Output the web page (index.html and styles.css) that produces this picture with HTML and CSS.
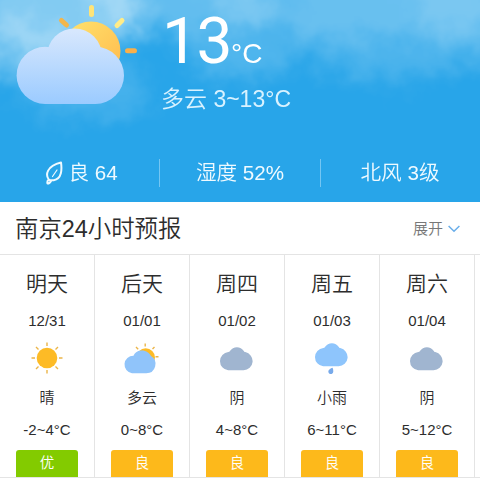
FILE: index.html
```html
<!DOCTYPE html>
<html lang="zh-CN">
<head>
<meta charset="utf-8">
<title>南京天气</title>
<link rel="stylesheet" href="styles.css">
</head>
<body>
<svg class="defs" width="0" height="0" aria-hidden="true">
  <defs>
    <linearGradient id="sunFill" x1="0" y1="0" x2="1" y2="1"><stop offset="0" stop-color="#ffe46e"/><stop offset="1" stop-color="#ffb84b"/></linearGradient>
    <linearGradient id="cloudFill" gradientUnits="userSpaceOnUse" x1="0" y1="28" x2="0" y2="104"><stop offset="0" stop-color="#d9e8fd"/><stop offset="1" stop-color="#9bcbff"/></linearGradient>
    <symbol id="overcast" viewBox="0 0 36 32"><path d="M10.200 28.300h15.400a9.200 9.200 0 0 0 1.700-18.200c-.8-.2-1.100-.5-1.500-1.100a8.300 8.300 0 0 0-13.800 0c-.4.600-.9.900-1.700 1A9.200 9.200 0 0 0 10.200 28.300z"/></symbol>
  </defs>
</svg>
<main class="page">
  <section class="hero">
    <svg class="sky" viewBox="0 0 480 202" aria-hidden="true">
      <defs>
        <filter id="vapor" filterUnits="userSpaceOnUse" x="-60" y="-60" width="600" height="262" color-interpolation-filters="sRGB">
          <feGaussianBlur in="SourceGraphic" stdDeviation="11" result="b"/>
          <feTurbulence type="fractalNoise" baseFrequency=".04" numOctaves="4" seed="8" result="n"/>
          <feDisplacementMap in="b" in2="n" scale="36" xChannelSelector="R" yChannelSelector="G"/>
          <feGaussianBlur stdDeviation="1.300"/>
        </filter>
      </defs>
      <g fill="#fff" filter="url(#vapor)">
        <ellipse cx="60" cy="5" rx="80" ry="50" opacity=".42"/>
        <ellipse cx="10" cy="50" rx="55" ry="28" opacity=".3"/>
        <ellipse cx="85" cy="90" rx="65" ry="30" opacity=".14"/>
        <ellipse cx="185" cy="0" rx="95" ry="35" opacity=".27"/>
        <ellipse cx="240" cy="55" rx="55" ry="24" opacity=".19"/>
        <ellipse cx="360" cy="0" rx="150" ry="40" opacity=".17"/>
        <ellipse cx="400" cy="20" rx="120" ry="60" opacity=".16"/>
        <ellipse cx="465" cy="0" rx="50" ry="50" opacity=".12"/>
      </g>
    </svg>
    <div class="current">
      <svg class="current-icon" viewBox="0 0 130 105" aria-hidden="true">
        <circle cx="81" cy="51" r="29.500" fill="url(#sunFill)"/>
        <g stroke-width="5" stroke-linecap="round" fill="none">
          <path d="M81.500 7.500v7" stroke="#ffe477"/><path d="M51.500 20.500l5 4.500" stroke="#f2b64c"/><path d="M112 20.500l-5 5" stroke="#ffec88"/><path d="M117.500 50.700h7" stroke="#f9b04a"/>
        </g>
        <g fill="url(#cloudFill)"><circle cx="35.200" cy="75.400" r="28.600"/><circle cx="85.400" cy="75.400" r="28.600"/><circle cx="64.500" cy="56" r="27.500"/><path d="M35.200 60h50.200v44H35.200z"/></g>
      </svg>
      <div class="reading">
        <div class="temp"><span class="degrees">13</span><span class="unit">°C</span></div>
        <div class="range">多云 3~13°C</div>
      </div>
    </div>
    <div class="stats">
      <div class="stat"><svg class="leaf" viewBox="0 0 18 24" aria-hidden="true"><path d="M3.800 18.500C.3 14 1.500 5 16 1.500C17 8.500 16.800 18.200 8.800 19.200C6.800 19.500 5.200 19.500 3.800 18.500Q1.800 20 2.500 22.500Q4.800 22.500 6 20"/><path class="vein" d="M7.500 15.500L12 9"/></svg>良 64</div>
      <div class="stat">湿度 52%</div>
      <div class="stat">北风 3级</div>
    </div>
  </section>
  <header class="bar">
    <h1 class="title">南京24小时预报</h1>
    <div class="expand">展开<svg class="chevron" viewBox="0 0 12 8" aria-hidden="true"><path d="M.6 1l5.400 5.200L11.400 1"/></svg></div>
  </header>
  <section class="days">
    <article class="day">
      <div class="name">明天</div><div class="date">12/31</div>
      <svg class="icon" viewBox="0 0 36 32"><circle cx="18" cy="16" r="10.300" fill="#fdbb26"/><path class="rays" d="M18 .5v3.500M18 28v3.500M2.500 16H6M30 16h3.500M7 5l2.500 2.500M26.500 24.500L29 27M29 5l-2.500 2.500M9.500 24.500L7 27"/></svg>
      <div class="sky-text">晴</div><div class="temps">-2~4°C</div><div class="badge good">优</div>
    </article>
    <article class="day">
      <div class="name">后天</div><div class="date">01/01</div>
      <svg class="icon shifted" viewBox="0 0 36 32"><circle cx="22.700" cy="15.500" r="9.300" fill="#fdbb26"/><path class="rays" d="M22.200 1.500v3M13 5l2.200 2.200M31.500 5l-2 2M32.500 14.800h3"/><path fill="#90c4fa" d="M9 31.200h14.300a9.200 9.200 0 0 0 4.700-17.100C26.500 11 23 8.300 18 8.600c-4 .3-6.300 2.500-7.500 5.100A8.800 8.800 0 0 0 9 31.200z"/></svg>
      <div class="sky-text">多云</div><div class="temps">0~8°C</div><div class="badge">良</div>
    </article>
    <article class="day">
      <div class="name">周四</div><div class="date">01/02</div>
      <svg class="icon gray shifted" viewBox="0 0 36 32"><use href="#overcast" width="36" height="32"/></svg>
      <div class="sky-text">阴</div><div class="temps">4~8°C</div><div class="badge">良</div>
    </article>
    <article class="day">
      <div class="name">周五</div><div class="date">01/03</div>
      <svg class="icon shifted" viewBox="0 0 36 32"><g fill="#8ec5fc" transform="translate(0 -4)"><use href="#overcast" width="36" height="32"/></g><path fill="#78aaea" d="M19.600 25.800c-2 .7-4.300 1.800-4.300 3.800a2.500 2.500 0 0 0 5 0c0-1.400-.1-2.600-.7-3.800z"/></svg>
      <div class="sky-text">小雨</div><div class="temps">6~11°C</div><div class="badge">良</div>
    </article>
    <article class="day">
      <div class="name">周六</div><div class="date">01/04</div>
      <svg class="icon gray shifted" viewBox="0 0 36 32"><use href="#overcast" width="36" height="32"/></svg>
      <div class="sky-text">阴</div><div class="temps">5~12°C</div><div class="badge">良</div>
    </article>
  </section>
</main>
</body>
</html>
```
FILE: styles.css
```css
* { box-sizing: border-box; }
body { margin: 0; background: #fff; color: #2d2d2d; font-family: "Liberation Sans", "Noto Sans CJK SC", sans-serif; font-weight: 350; }
.defs { position: absolute; }
.page { width: 480px; height: 480px; overflow: hidden; }
.hero { position: relative; height: 202px; overflow: hidden; background: #28a5e9; color: #fff; }
.sky { position: absolute; left: 0; top: 0; width: 480px; height: 202px; }
.current { position: relative; display: flex; height: 143px; padding-left: 10px; }
.current-icon { width: 130px; height: 105px; flex: none; }
.reading { padding-left: 22px; }
.temp { height: 83px; padding-top: 4px; font-size: 65px; line-height: 74px; white-space: nowrap; }
.degrees { font-family: Roboto, "Liberation Sans", sans-serif; font-size: 64px; font-weight: 400; letter-spacing: -1.500px; }
.unit { font-size: 28px; }
.range { margin-left: -1px; font-size: 23px; line-height: 32px; color: #d8f2ff; white-space: nowrap; }
.stats { position: relative; display: flex; height: 59px; }
.stat { position: relative; flex: none; width: 160px; display: flex; align-items: center; justify-content: center; height: 59px; font-size: 20.600px; line-height: 30px; color: #effaff; }
.stat:first-child { padding-left: 3px; }
.stat + .stat::before { content: ""; position: absolute; left: -1px; top: 16px; height: 28px; width: 1px; background: #74c6f3; }
.stat:last-child::before { left: 0; }
.leaf { width: 18px; height: 24px; margin-right: 5px; fill: none; stroke: #effaff; stroke-width: 2; stroke-linejoin: round; stroke-linecap: round; }
.vein { stroke-width: 1.200; }
.bar { display: flex; justify-content: space-between; align-items: center; height: 52px; padding: 2px 20px 0 15px; }
.title { margin: 0; font-size: 23.400px; line-height: 34px; font-weight: inherit; }
.expand { display: flex; align-items: center; gap: 5px; font-size: 15px; line-height: 22px; color: #777; }
.chevron { width: 12px; height: 8px; fill: none; stroke: #69aeea; stroke-width: 1.500; }
.days { display: flex; height: 224px; border-top: 1px solid #e4e4e4; border-bottom: 1px solid #e4e4e4; }
.day { flex: none; display: flex; flex-direction: column; align-items: center; width: 95px; padding: 12px 0 0; border-right: 1px solid #e4e4e4; }
.name { height: 33px; font-size: 21px; line-height: 33px; }
.date { margin-top: 12px; height: 18px; font-size: 15px; line-height: 18px; }
.icon { width: 36px; height: 32px; margin-top: 12px; flex: none; }
.shifted { margin-right: 2px; }
.gray { fill: #a0b5d0; }
.rays { fill: none; stroke: #ecb548; stroke-width: 1.400; }
.sky-text { margin-top: 13px; height: 22px; font-size: 15px; line-height: 22px; }
.temps { margin-top: 12px; height: 18px; font-size: 15px; line-height: 18px; }
.badge { margin-top: 11px; width: 62px; height: 27px; border-radius: 3px 3px 0 0; background: #fdb91b; color: #fff; font-size: 14.500px; line-height: 27px; text-align: center; flex: none; }
.good { background: #83cb00; }
```
